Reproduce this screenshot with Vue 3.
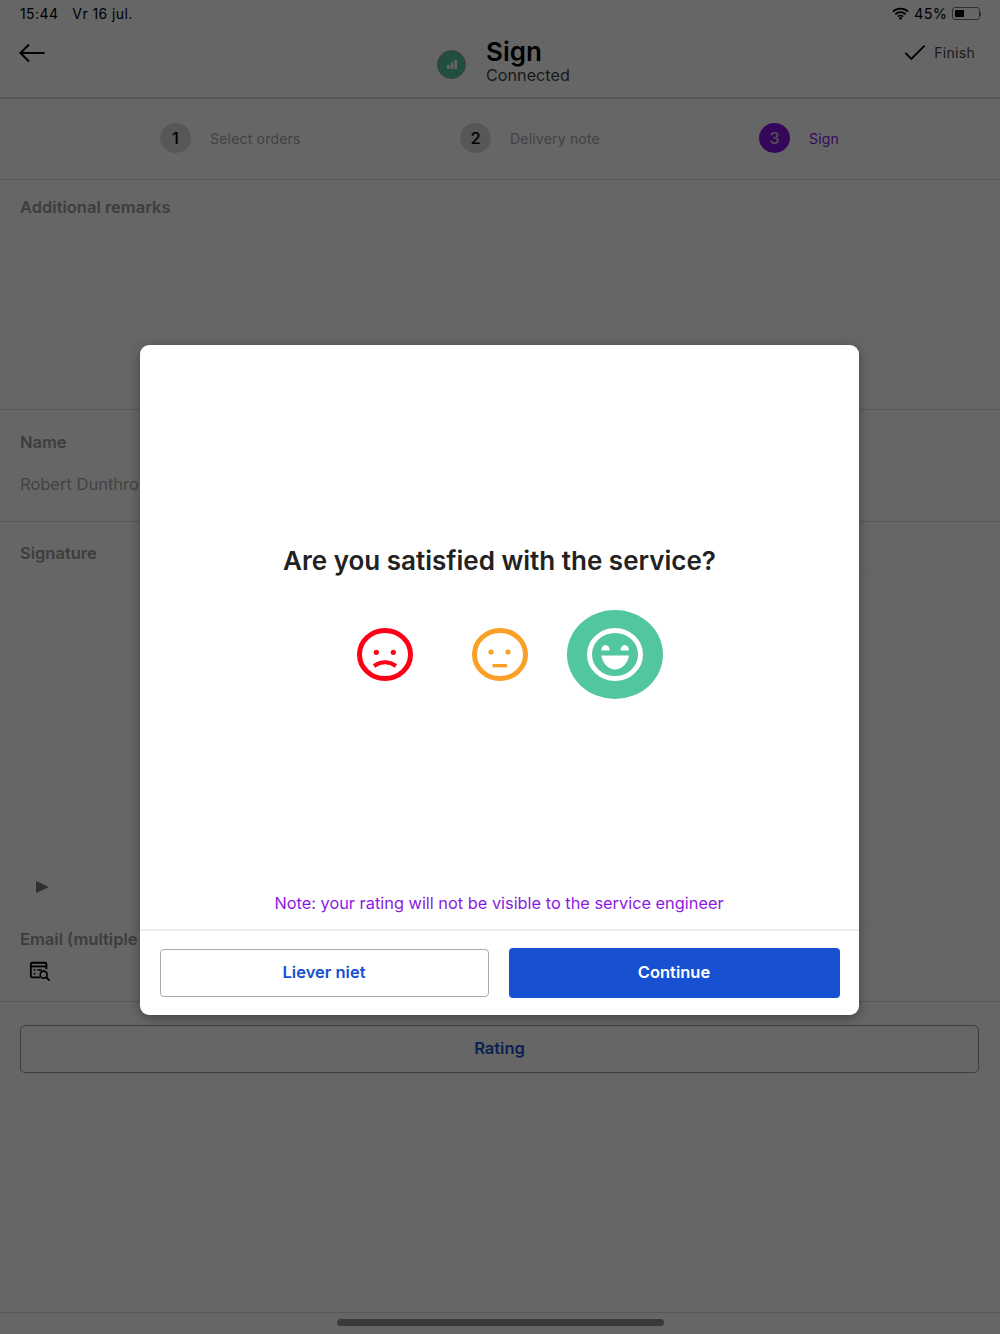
<template>
  <div class="page">
    <div class="status">
      <div class="status-left">
        <span>15:44</span>
        <span>Vr 16 jul.</span>
      </div>
      <div class="status-right">
        <svg class="wifi" viewBox="0 0 18 13" width="17" height="13">
          <path d="M1 4.600a11.500 11.500 0 0 1 16 0M3.600 7.300a7.800 7.800 0 0 1 10.800 0M6.200 9.900a4 4 0 0 1 5.600 0" fill="none" stroke="#000" stroke-width="1.900" />
          <circle cx="9" cy="11.600" r="1.400" fill="#000" />
        </svg>
        <span class="pct">45%</span>
        <div class="battery"><div class="battery-fill" :style="{ width: battery * 100 + '%' }"></div></div>
        <div class="battery-tip"></div>
      </div>
    </div>

    <header class="topbar">
      <svg class="back" viewBox="0 0 26 20" width="26" height="20">
        <path d="M25.500 10H1.500M10 1.500 1.500 10l8.500 8.500" fill="none" stroke="#000" stroke-width="2" />
      </svg>
      <div class="title-wrap">
        <div class="conn-dot">
          <svg viewBox="0 0 10 9" width="10" height="9">
            <rect x="0" y="5" width="2.600" height="4" fill="#fff" />
            <rect x="3.700" y="2.500" width="2.600" height="6.500" fill="#fff" />
            <rect x="7.400" y="0" width="2.600" height="9" fill="#fff" />
          </svg>
        </div>
        <div class="title-text">
          <div class="title">Sign</div>
          <div class="subtitle">Connected</div>
        </div>
      </div>
      <div class="finish">
        <svg viewBox="0 0 24 18" width="22" height="17">
          <path d="M1.500 9.500 8 16 22.500 1.500" fill="none" stroke="#000" stroke-width="2" />
        </svg>
        <span>Finish</span>
      </div>
    </header>

    <nav class="stepper">
      <div v-for="step in steps" :key="step.nr" class="step" :class="{ active: step.active }">
        <div class="step-nr">{{ step.nr }}</div>
        <div class="step-label">{{ step.label }}</div>
      </div>
    </nav>

    <section class="sec sec-remarks">
      <div class="label">Additional remarks</div>
    </section>

    <section class="sec sec-name">
      <div class="label">Name</div>
      <div class="value">Robert Dunthrope</div>
    </section>

    <section class="sec sec-sign">
      <div class="label">Signature</div>
      <div class="pad">
        <svg class="play" viewBox="0 0 13 12" width="13" height="12">
          <path d="M0 0 13 6 0 12Z" fill="#777" />
        </svg>
      </div>
      <div class="label email-label">Email (multiple addresses)</div>
      <svg class="email-icon" viewBox="0 0 24 24" width="22" height="22">
        <path d="M12 19H3.500A1.500 1.500 0 0 1 2 17.500V4.500A1.500 1.500 0 0 1 3.500 3h14A1.500 1.500 0 0 1 19 4.500V10" fill="none" stroke="#000" stroke-width="2" />
        <path d="M2 7h17" stroke="#000" stroke-width="2" />
        <path d="M5 11h2M5 15h2M9 11h5" stroke="#000" stroke-width="1.600" />
        <circle cx="16" cy="16" r="3.800" fill="none" stroke="#000" stroke-width="1.800" />
        <path d="M18.800 18.800 22.500 22.500" stroke="#000" stroke-width="2" />
      </svg>
    </section>

    <section class="rating-wrap">
      <div class="rating-btn">Rating</div>
    </section>

    <div class="spacer"></div>
    <footer class="home-bar"><div class="home-line"></div></footer>

    <div class="overlay">
      <div class="modal">
        <div class="modal-body">
          <h2 class="question">Are you satisfied with the service?</h2>
          <div class="faces">
            <div class="face">
              <svg viewBox="0 0 56 53" width="56" height="53">
                <ellipse cx="28" cy="26.500" rx="25.500" ry="24" fill="none" stroke="#fe0015" stroke-width="5" />
                <circle cx="19.300" cy="24.300" r="2.600" fill="#fe0015" />
                <circle cx="36.300" cy="24.300" r="2.600" fill="#fe0015" />
                <path d="M17 38Q28 30.500 39 38" fill="none" stroke="#fe0015" stroke-width="4" />
              </svg>
            </div>
            <div class="face">
              <svg viewBox="0 0 56 53" width="56" height="53">
                <ellipse cx="28" cy="26.500" rx="25.500" ry="24" fill="none" stroke="#fba026" stroke-width="5" />
                <circle cx="19" cy="24" r="2.600" fill="#fba026" />
                <circle cx="36" cy="24" r="2.600" fill="#fba026" />
                <path d="M20.500 37.700H35" fill="none" stroke="#fba026" stroke-width="3.400" />
              </svg>
            </div>
            <div class="face face-selected">
              <svg viewBox="0 0 56 53" width="56" height="53">
                <ellipse cx="28" cy="26.500" rx="25.500" ry="24" fill="none" stroke="#fff" stroke-width="5" />
                <path d="M14.300 22.500a4.200 5.500 0 0 1 8.400 0ZM33.500 22.500a4.200 5.500 0 0 1 8.400 0Z" fill="#fff" />
                <path d="M14.300 27.500H42C41 35 35 41.500 28 41.500S15.500 35 14.300 27.500Z" fill="#fff" />
              </svg>
            </div>
          </div>
          <div class="note">Note: your rating will not be visible to the service engineer</div>
        </div>
        <div class="modal-actions">
          <button class="btn btn-outline">Liever niet</button>
          <button class="btn btn-primary">Continue</button>
        </div>
      </div>
    </div>
  </div>
</template>

<script setup>
const battery = 0.45

const steps = [
  { nr: 1, label: 'Select orders', active: false },
  { nr: 2, label: 'Delivery note', active: false },
  { nr: 3, label: 'Sign', active: true }
]
</script>

<style>
html,
body {
  margin: 0;
  background: #fff;
}
</style>

<style scoped>
.page {
  position: relative;
  width: 1000px;
  height: 1334px;
  overflow: hidden;
  display: flex;
  flex-direction: column;
  background: #fff;
  color: #000;
  font-family: Inter, "Liberation Sans", sans-serif;
}

.status {
  height: 27px;
  padding: 0 19px 0 20px;
  display: flex;
  align-items: center;
  justify-content: space-between;
  font-size: 14px;
  letter-spacing: 0.4px;
}

.status-left {
  display: flex;
  gap: 14px;
}

.status-right {
  display: flex;
  align-items: center;
}

.wifi {
  margin-right: 5px;
}

.pct {
  font-size: 14.500px;
}

.battery {
  margin-left: 4px;
  width: 28px;
  height: 13px;
  box-sizing: border-box;
  padding: 2px;
  border: 1px solid #777;
  border-radius: 3px;
}

.battery-fill {
  height: 100%;
  background: #000;
  border-radius: 1px;
}

.battery-tip {
  width: 1.500px;
  height: 4px;
  background: #777;
}

.topbar {
  height: 72px;
  box-sizing: border-box;
  border-bottom: 2px solid #ddd;
  display: flex;
  align-items: flex-start;
  justify-content: space-between;
  padding: 16px 25px 0 19px;
}

.title-wrap {
  display: flex;
  align-items: center;
  gap: 20px;
  margin-left: 392px;
  margin-top: -5px;
}

.conn-dot {
  width: 29px;
  height: 29px;
  margin-top: 6px;
  box-sizing: border-box;
  border: 1px solid #999;
  border-radius: 50%;
  background: #52c6a0;
  display: flex;
  align-items: center;
  justify-content: center;
}

.title {
  font-size: 26px;
  font-weight: 600;
  line-height: 28px;
}

.subtitle {
  font-size: 16.200px;
  line-height: 19px;
  color: #444;
}

.finish {
  margin-left: auto;
  margin-top: 1px;
  display: flex;
  align-items: center;
  gap: 8px;
  font-size: 14px;
  color: #444;
  letter-spacing: 0.3px;
}

.stepper {
  height: 81px;
  box-sizing: border-box;
  border-bottom: 1px solid #ddd;
  padding: 0 0 2px 160px;
  display: flex;
  align-items: center;
}

.step {
  flex: 0 0 300px;
  display: flex;
  align-items: center;
  gap: 19px;
}

.step:last-child {
  flex-basis: auto;
}

.step:nth-child(2) {
  flex-basis: 299px;
}

.step-nr {
  width: 31px;
  height: 30px;
  border-radius: 50%;
  background: #d7d9d8;
  display: flex;
  align-items: center;
  justify-content: center;
  font-size: 16.500px;
  font-weight: 500;
}

.step-label {
  font-size: 14px;
  color: #a5a5a5;
  letter-spacing: 0.2px;
}

.step.active .step-nr {
  background: #8613e0;
  color: #ccc;
}

.step.active .step-label {
  color: #8613e0;
}

.sec {
  padding: 0 20px;
  box-sizing: border-box;
}

.label {
  font-size: 16.500px;
  font-weight: 600;
  color: #999;
  line-height: 20px;
  white-space: nowrap;
}

.sec-remarks {
  height: 230px;
  border-bottom: 1px solid #ddd;
  padding-top: 17px;
}

.sec-name {
  height: 112px;
  border-bottom: 1px solid #ddd;
  padding-top: 22px;
}

.value {
  margin-top: 21px;
  font-size: 16.500px;
  line-height: 22px;
  color: #a8a8a8;
  white-space: nowrap;
}

.sec-sign {
  height: 480px;
  border-bottom: 1px solid #ddd;
  padding-top: 21px;
}

.pad {
  height: 356px;
  margin-top: 6px;
  background: #fff;
  box-shadow: 0 0 3px rgba(0, 0, 0, 0.08);
  display: flex;
  align-items: flex-end;
  padding: 0 0 32px 16px;
  box-sizing: border-box;
}

.email-label {
  margin-top: 4px;
}

.email-icon {
  display: block;
  margin: 11px 0 0 9px;
}

.rating-wrap {
  padding: 23px 21px 0 20px;
}

.rating-btn {
  height: 48px;
  box-sizing: border-box;
  border: 1.500px solid #999;
  border-radius: 5px;
  padding-bottom: 2px;
  display: flex;
  align-items: center;
  justify-content: center;
  font-size: 16.500px;
  font-weight: 600;
  color: #1750d0;
}

.spacer {
  flex: 1;
}

.home-bar {
  height: 22px;
  box-sizing: border-box;
  border-top: 1px solid #ddd;
  display: flex;
  justify-content: center;
  padding-top: 6px;
}

.home-line {
  width: 327px;
  height: 7px;
  border-radius: 4px;
  background: #919191;
}

.overlay {
  position: absolute;
  inset: 0;
  background: rgba(0, 0, 0, 0.6);
  display: flex;
  justify-content: center;
  align-items: flex-start;
  padding: 345px 2px 0 0;
}

.modal {
  width: 719px;
  height: 670px;
  background: #fff;
  border-radius: 9px;
  box-shadow: 0 3px 12px rgba(0, 0, 0, 0.35);
  display: flex;
  flex-direction: column;
}

.modal-body {
  flex: 1;
  display: flex;
  flex-direction: column;
  align-items: center;
  padding-top: 199px;
  border-bottom: 2px solid #e8ecec;
}

.question {
  margin: 0 0 0 1px;
  font-size: 26px;
  line-height: 34px;
  font-weight: 600;
  color: #222;
}

.faces {
  margin: 32px 0 0 2px;
  display: flex;
  gap: 19px;
}

.face {
  width: 96px;
  height: 89px;
  border-radius: 50%;
  display: flex;
  align-items: center;
  justify-content: center;
}

.face-selected {
  background: #52c6a0;
}

.note {
  margin-top: auto;
  margin-bottom: 15px;
  font-size: 16.350px;
  line-height: 22px;
  color: #8a1be0;
}

.modal-actions {
  height: 84px;
  box-sizing: border-box;
  padding: 0 19px 0 20px;
  display: flex;
  align-items: center;
  gap: 20px;
}

.btn {
  font-family: inherit;
  font-size: 16.500px;
  font-weight: 600;
  border-radius: 4px;
  padding-bottom: 3px;
  cursor: pointer;
}

.btn-outline {
  width: 329px;
  height: 48px;
  background: #fff;
  border: 1.500px solid #aaa;
  color: #1750d0;
}

.btn-primary {
  width: 331px;
  height: 50px;
  background: #1750d0;
  border: none;
  color: #fff;
}
</style>
